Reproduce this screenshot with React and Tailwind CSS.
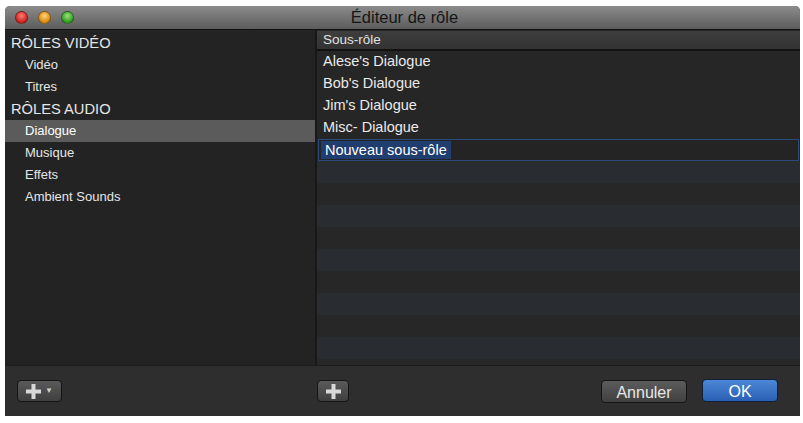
const font = { fontFamily: '"Liberation Sans", Arial, sans-serif' };

const videoRoles = ['Vidéo', 'Titres'];
const audioRoles = ['Dialogue', 'Musique', 'Effets', 'Ambient Sounds'];
const subRoles = ["Alese's Dialogue", "Bob's Dialogue", "Jim's Dialogue", 'Misc- Dialogue'];

function Light({ color }) {
  return (
    <span
      className="block w-[13px] h-[13px] rounded-full border border-black/40"
      style={{ background: color }}
    />
  );
}

function PlusIcon() {
  return (
    <svg width="15" height="15" viewBox="0 0 15 15">
      <rect x="5.5" y="0" width="4" height="15" fill="#d8d8d8" />
      <rect x="0" y="5.5" width="15" height="4" fill="#d8d8d8" />
    </svg>
  );
}

export default function App() {
  const stripes = Array.from({ length: 10 });

  return (
    <div className="w-[803px] h-[423px] bg-white pt-[6px] pl-[5px]" style={font}>
      <div className="w-[795px] h-[410px] flex flex-col rounded-t-[5px] overflow-hidden bg-[#2e2e2e]">
        {/* title bar */}
        <div className="relative h-[24px] shrink-0 flex items-center bg-gradient-to-b from-[#8c8c8c] to-[#5c5c5c] border-b border-[#111]">
          <div className="flex items-center gap-[10px] pl-[10px]">
            <Light color="radial-gradient(circle at 50% 35%, #ff7b73, #c9231c 70%)" />
            <Light color="radial-gradient(circle at 50% 35%, #ffd27a, #d98a0a 70%)" />
            <Light color="radial-gradient(circle at 50% 35%, #9be27a, #2f9a1f 70%)" />
          </div>
          <div className="absolute inset-0 flex items-center justify-center text-[16.5px] text-[#161616] pl-[4px]">
            Éditeur de rôle
          </div>
        </div>

        {/* content */}
        <div className="flex h-[335px] shrink-0">
          <div className="w-[310px] bg-[#232323] pt-[2px] text-[#e6e6e6]">
            <div className="h-[22px] flex items-center pl-[6px] text-[14.7px]">RÔLES VIDÉO</div>
            {videoRoles.map((r) => (
              <div key={r} className="h-[22px] flex items-center pl-[20px] text-[13px]">{r}</div>
            ))}
            <div className="h-[22px] flex items-center pl-[6px] text-[14.7px]">RÔLES AUDIO</div>
            {audioRoles.map((r, i) => (
              <div
                key={r}
                className={`h-[22px] flex items-center pl-[20px] text-[13px] ${i === 0 ? 'bg-[#5b5b5b] text-white' : ''}`}
              >
                {r}
              </div>
            ))}
          </div>
          <div className="w-[2px] bg-[#181818]" />
          <div className="flex-1 flex flex-col bg-[#272727] overflow-hidden">
            <div className="h-[20px] shrink-0 flex items-center pl-[6px] text-[13.5px] text-[#e0e0e0] bg-gradient-to-b from-[#3e3e3e] to-[#333] border-b-2 border-[#121212] mt-[1px]">
              Sous-rôle
            </div>
            {subRoles.map((r) => (
              <div key={r} className="h-[22px] shrink-0 flex items-center pl-[6px] text-[14.5px] text-[#eaeaea] bg-[#262626]">
                {r}
              </div>
            ))}
            <div className="h-[22px] shrink-0 flex items-center pl-[2px] mx-[1px] border border-[#2b4a7c] bg-[#242424]">
              <span className="bg-[#1f3d6e] px-[4px] text-[14.5px] text-white leading-[18px]">Nouveau sous-rôle</span>
            </div>
            {stripes.map((_, i) => (
              <div key={i} className={`h-[22px] shrink-0 ${i % 2 === 0 ? 'bg-[#292c30]' : 'bg-[#272727]'}`} />
            ))}
          </div>
        </div>

        {/* bottom bar */}
        <div className="flex-1 flex items-center border-t border-[#1c1c1c] bg-[#2e2e2e] pl-[12px] pr-[22px]">
          <button className="w-[45px] h-[22px] flex items-center justify-center gap-[4px] rounded-[4px] border border-[#151515] bg-gradient-to-b from-[#5a5a5a] to-[#3f3f3f]">
            <PlusIcon />
            <span className="text-[8px] text-[#cfcfcf]">▼</span>
          </button>
          <button className="ml-[255px] w-[32px] h-[22px] flex items-center justify-center rounded-[4px] border border-[#151515] bg-gradient-to-b from-[#5a5a5a] to-[#3f3f3f]">
            <PlusIcon />
          </button>
          <div className="flex-1" />
          <button className="w-[86px] h-[23px] rounded-[4px] border border-[#151515] bg-gradient-to-b from-[#5c5c5c] to-[#404040] text-[16px] text-[#e8e8e8]">
            Annuler
          </button>
          <button className="ml-[15px] w-[76px] h-[23px] -mt-[2px] rounded-[4px] border border-[#10203a] bg-gradient-to-b from-[#4d87d6] to-[#2a5fb4] text-[16px] text-white">
            OK
          </button>
        </div>
      </div>
    </div>
  );
}
